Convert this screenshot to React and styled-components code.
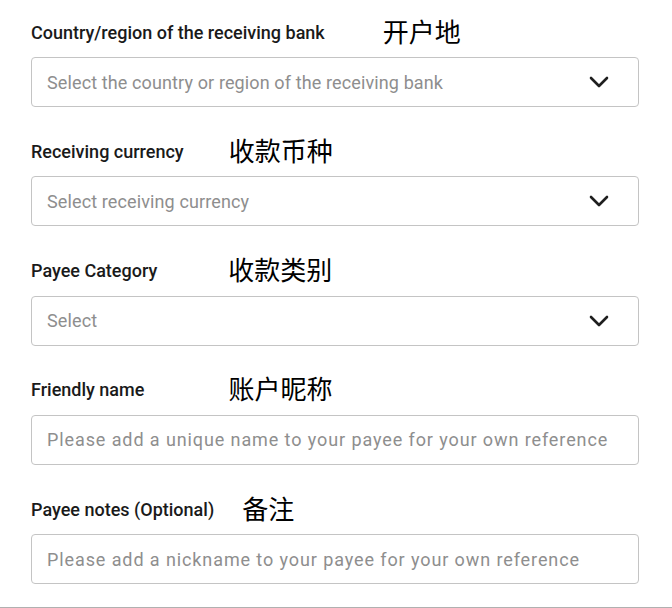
import React from "react";
import styled, { createGlobalStyle } from "styled-components";

const GlobalStyle = createGlobalStyle`
  html, body {
    margin: 0;
    padding: 0;
    background: #fff;
  }
  body {
    font-family: Roboto, "Noto Sans CJK SC", sans-serif;
  }
`;

const Page = styled.div`
  width: 672px;
  height: 608px;
  box-sizing: border-box;
  border-bottom: 1px solid #b0b0b0;
  padding: 17px 33px 0 31px;
  display: flex;
  flex-direction: column;
  gap: 29.3px;
`;

const Field = styled.div`
  display: flex;
  flex-direction: column;
  gap: 10px;
`;

const LabelRow = styled.div`
  height: 30px;
  display: flex;
  align-items: center;
`;

const Label = styled.span`
  font-family: Roboto, sans-serif;
  font-weight: 500;
  font-size: 18px;
  color: #1a1a1a;
`;

const Note = styled.span`
  margin-left: ${(p) => p.$left}px;
  margin-top: -3px;
  font-family: "Noto Sans CJK SC", sans-serif;
  font-size: 26px;
  color: #000;
  line-height: 30px;
`;

const Box = styled.div`
  height: 50px;
  box-sizing: border-box;
  border: 1px solid #c4c4c4;
  border-radius: 4px;
  display: flex;
  align-items: center;
  justify-content: space-between;
  padding: 0 29px 0 15px;
`;

const Placeholder = styled.span`
  font-family: Roboto, sans-serif;
  font-size: 18px;
  color: #8e8e8e;
  letter-spacing: ${(p) => (p.$wide ? "0.9px" : "0.12px")};
`;

const Chevron = () => (
  <svg width="20" height="12" viewBox="0 0 20 12" fill="none">
    <polyline
      points="2,2 10,10 18,2"
      stroke="#1f1f1f"
      strokeWidth="2.6"
      strokeLinecap="round"
      strokeLinejoin="round"
    />
  </svg>
);

const fields = [
  {
    label: "Country/region of the receiving bank",
    note: "开户地",
    left: 58,
    placeholder: "Select the country or region of the receiving bank",
    select: true,
  },
  {
    label: "Receiving currency",
    note: "收款币种",
    left: 45,
    placeholder: "Select receiving currency",
    select: true,
  },
  {
    label: "Payee Category",
    note: "收款类别",
    left: 71,
    placeholder: "Select",
    select: true,
  },
  {
    label: "Friendly name",
    note: "账户昵称",
    left: 84,
    placeholder: "Please add a unique name to your payee for your own reference",
  },
  {
    label: "Payee notes (Optional)",
    note: "备注",
    left: 28,
    placeholder: "Please add a nickname to your payee for your own reference",
  },
];

const App = () => {
  return (
    <>
      <GlobalStyle />
      <Page>
        {fields.map((f) => (
          <Field key={f.label}>
            <LabelRow>
              <Label>{f.label}</Label>
              <Note $left={f.left}>{f.note}</Note>
            </LabelRow>
            <Box>
              <Placeholder $wide={!f.select}>{f.placeholder}</Placeholder>
              {f.select && <Chevron />}
            </Box>
          </Field>
        ))}
      </Page>
    </>
  );
};

export default App;
